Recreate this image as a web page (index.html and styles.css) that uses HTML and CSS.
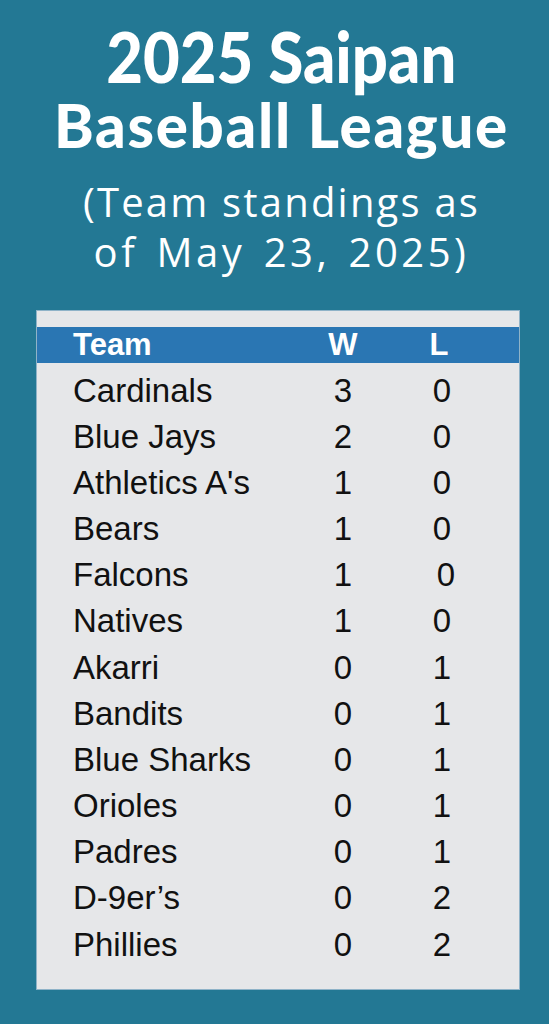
FILE: index.html
```html
<!DOCTYPE html>
<html lang="en">
<head>
<meta charset="utf-8">
<title>2025 Saipan Baseball League</title>
<link rel="stylesheet" href="styles.css">
</head>
<body>
<div class="page">
  <header class="head">
    <h1 class="title"><span class="t1">2025 Saipan</span><span class="t2">Baseball League</span></h1>
    <p class="sub"><span class="s1">(Team standings as</span><span class="s2">of May 23, 2025)</span></p>
  </header>
  <section class="panel">
    <div class="row hdr"><span>Team</span><span class="n">W</span><span></span><span class="n nl">L</span></div>
    <div class="row"><span>Cardinals</span><span class="n">3</span><span></span><span class="n">0</span></div>
    <div class="row"><span>Blue Jays</span><span class="n">2</span><span></span><span class="n">0</span></div>
    <div class="row"><span>Athletics A's</span><span class="n">1</span><span></span><span class="n">0</span></div>
    <div class="row"><span>Bears</span><span class="n">1</span><span></span><span class="n">0</span></div>
    <div class="row"><span>Falcons</span><span class="n">1</span><span></span><span class="n nudge">0</span></div>
    <div class="row"><span>Natives</span><span class="n">1</span><span></span><span class="n">0</span></div>
    <div class="row"><span>Akarri</span><span class="n">0</span><span></span><span class="n">1</span></div>
    <div class="row"><span>Bandits</span><span class="n">0</span><span></span><span class="n">1</span></div>
    <div class="row"><span>Blue Sharks</span><span class="n">0</span><span></span><span class="n">1</span></div>
    <div class="row"><span>Orioles</span><span class="n">0</span><span></span><span class="n">1</span></div>
    <div class="row"><span>Padres</span><span class="n">0</span><span></span><span class="n">1</span></div>
    <div class="row"><span>D-9er’s</span><span class="n">0</span><span></span><span class="n">2</span></div>
    <div class="row"><span>Phillies</span><span class="n">0</span><span></span><span class="n">2</span></div>
  </section>
</div>
</body>
</html>
```

FILE: styles.css
```css
html, body {
  margin: 0;
  padding: 0;
  background: #237894;
}

.page {
  width: 549px;
  height: 1024px;
  background: #237894;
  overflow: hidden;
}

.head {
  padding: 21px 0 0 14px;
  color: #ffffff;
  text-align: center;
}

.title {
  margin: 0;
  font-family: Lato, "Liberation Sans", sans-serif;
  font-weight: 900;
  display: flex;
  flex-direction: column;
  align-items: center;
  white-space: nowrap;
}

.t1 {
  font-size: 70px;
  line-height: 70px;
  letter-spacing: 0;
  transform: scaleX(0.905);
}

.t2 {
  font-size: 60px;
  line-height: 68px;
  letter-spacing: 1.7px;
}

.sub {
  margin: 17.5px 0 0;
  font-family: "Open Sans", "DejaVu Sans", sans-serif;
  font-weight: 500;
  font-size: 40px;
  line-height: 50px;
  display: flex;
  flex-direction: column;
  align-items: center;
  white-space: nowrap;
}

.s1 {
  letter-spacing: 2.2px;
}

.s2 {
  letter-spacing: 3.5px;
  word-spacing: 4.5px;
}

.panel {
  box-sizing: border-box;
  margin: 33.5px 29px 0 36px;
  height: 680px;
  background: #e6e7e9;
  border: 1px solid #8fb3c8;
  padding-top: 16px;
  font-family: "Liberation Sans", Arial, sans-serif;
  color: #111111;
}

.row {
  display: grid;
  grid-template-columns: 251px 38px 61px 38px;
  padding-left: 36px;
  font-size: 33px;
  line-height: 46.17px;
  white-space: nowrap;
}

.row.hdr {
  background: #2a76b3;
  color: #ffffff;
  font-weight: 700;
  font-size: 31px;
  line-height: 36px;
  margin-bottom: 4.5px;
}

.n {
  text-align: center;
}

.nl {
  padding-right: 6px;
}

.nudge {
  padding-left: 8px;
}
```
